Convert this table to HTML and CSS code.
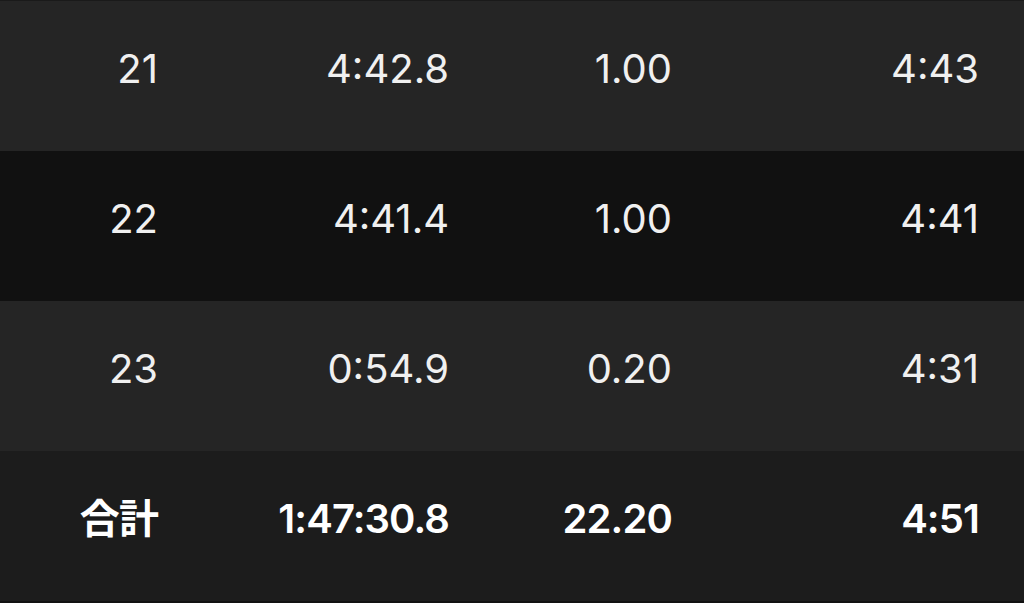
FILE: index.html
```html
<!DOCTYPE html>
<html lang="ja">
<head>
<meta charset="utf-8">
<link rel="stylesheet" href="styles.css">
</head>
<body>
<div class="table">
  <div class="row odd">
    <div class="cell">21</div><div class="cell">4:42.8</div><div class="cell">1.00</div><div class="cell">4:43</div>
  </div>
  <div class="row even">
    <div class="cell">22</div><div class="cell">4:41.4</div><div class="cell">1.00</div><div class="cell">4:41</div>
  </div>
  <div class="row odd">
    <div class="cell">23</div><div class="cell">0:54.9</div><div class="cell">0.20</div><div class="cell">4:31</div>
  </div>
  <div class="row total">
    <div class="cell">合計</div><div class="cell">1:47:30.8</div><div class="cell">22.20</div><div class="cell">4:51</div>
  </div>
</div>
</body>
</html>
```
FILE: styles.css
```css
html, body {
  margin: 0;
  padding: 0;
  background: #111111;
}
body {
  width: 1024px;
  height: 603px;
  overflow: hidden;
  font-family: Inter, "Noto Sans CJK JP", sans-serif;
  color: #f0f0f0;
}
.table {
  border-top: 1px solid #1a1a1a;
  border-bottom: 2px solid #111111;
}
.row {
  display: grid;
  grid-template-columns: 158px 291px 223px 307px;
  height: 150px;
  align-items: center;
  font-size: 40px;
  box-sizing: border-box;
  padding-bottom: 15px;
}
.cell {
  text-align: right;
  line-height: 1;
}
.odd { background: #252525; }
.even { background: #111111; }
.total {
  background: #1c1c1c;
  font-weight: 600;
  color: #ffffff;
  letter-spacing: -0.9px;
}
```
